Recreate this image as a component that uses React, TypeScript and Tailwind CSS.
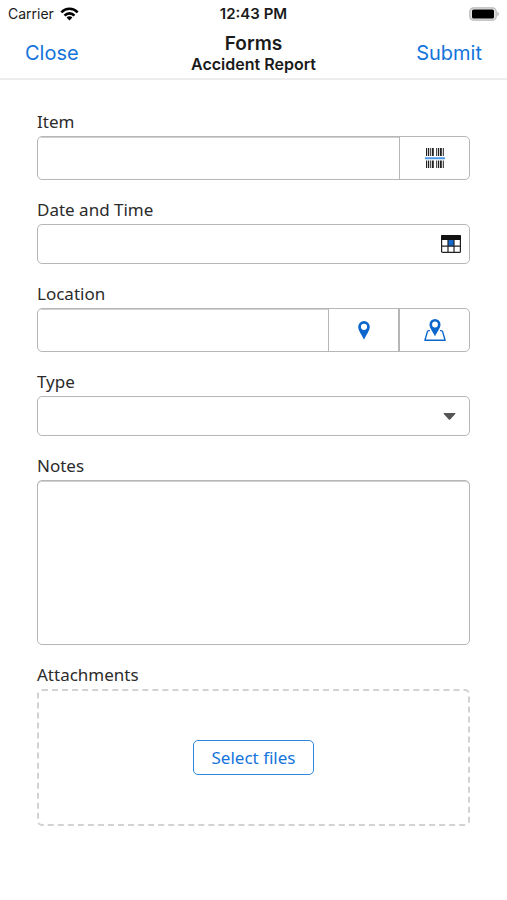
import React from 'react';

const inputClass =
  'min-w-0 flex-1 bg-transparent px-3 text-[17px] text-[#222] outline-none';
const insetClass = 'shadow-[inset_0_1px_0_#d0d0d0]';
const boxClass =
  'flex overflow-hidden rounded-[5px] border border-[#b6b6b6] bg-white';
const labelClass = 'block h-6 text-[17px] leading-5 text-[#2b2b2b]';

const WifiIcon = () => (
  <svg width="19" height="14" viewBox="0 0 20 14" fill="none" stroke="#000" strokeWidth="2.7" aria-hidden="true">
    <path d="M1.4 5.2C6.2.3 13.8.3 18.6 5.2" />
    <path d="M4.8 8.6C7.6 5.6 12.4 5.6 15.2 8.6" />
    <path d="M10 13.8 6.9 10.7C8.6 9 11.4 9 13.1 10.7Z" fill="#000" stroke="none" />
  </svg>
);

const BatteryIcon = () => (
  <svg width="30" height="14" viewBox="0 0 30 14" aria-hidden="true">
    <rect x="0.8" y="0.8" width="26.4" height="12.4" rx="3.8" fill="#e4e4e4" stroke="#b8b8b8" strokeWidth="1.2" />
    <rect x="3" y="2.5" width="22" height="9" rx="1.6" fill="#000" />
    <path d="M28.4 4.8C30.2 5.5 30.2 8.5 28.4 9.2Z" fill="#b0b0b0" />
  </svg>
);

const BarcodeIcon = () => (
  <svg width="20" height="20" viewBox="0 0 20 20" aria-hidden="true">
    <path
      d="M1 0h1.2v20H1zM3 0h1v20H3zM4.8 0h1v20h-1zM6.8 0h2v20h-2zM11.2 0h1v20h-1zM13 0h1v20h-1zM14.8 0h2v20h-2zM17.8 0h1v20h-1z"
      fill="#222"
    />
    <path d="M0 8h20v4.4H0z" fill="#fff" />
    <path d="M0 9.2h20v2H0z" fill="#4a96e6" />
  </svg>
);

const CalendarIcon = () => (
  <svg width="20" height="18" viewBox="0 0 20 18" aria-hidden="true">
    <rect x="0.6" y="0.6" width="18.8" height="16.8" rx="1" fill="#fff" stroke="#222" strokeWidth="1.2" />
    <path d="M0 1Q0 0 1 0H19Q20 0 20 1V5H0Z" fill="#111" />
    <rect x="7" y="5" width="6" height="6.2" fill="#1468cc" />
    <path d="M7 5v12.5M13 5v12.5M.5 11.2h19" stroke="#222" strokeWidth="1.2" />
  </svg>
);

const PinIcon = () => (
  <svg width="12" height="19" viewBox="0 0 12 19" aria-hidden="true">
    <path
      d="M6 0A5.8 5.8 0 0 0 .2 5.8C.2 10 3.9 13.7 6 18.8 8.1 13.7 11.8 10 11.8 5.8A5.8 5.8 0 0 0 6 0ZM6 2.7A3.1 3.1 0 1 1 6 8.9 3.1 3.1 0 0 1 6 2.7Z"
      fill="#0c66cc"
    />
  </svg>
);

const MapPinIcon = () => (
  <svg width="22" height="22" viewBox="0 0 22 22" aria-hidden="true">
    <path
      d="M11 0A5.5 5.5 0 0 0 5.5 5.5C5.5 9.6 9.1 12.8 11 17.6 12.9 12.8 16.5 9.6 16.5 5.5A5.5 5.5 0 0 0 11 0ZM11 2.6A2.9 2.9 0 1 1 11 8.4 2.9 2.9 0 0 1 11 2.6Z"
      fill="#0c66cc"
    />
    <path
      d="M6 11.6H4.8Q3.7 11.6 3.4 12.6L.9 21.3H21.1L18.6 12.6Q18.3 11.6 17.2 11.6H16"
      fill="none"
      stroke="#0c66cc"
      strokeWidth="1.4"
      strokeLinejoin="round"
    />
  </svg>
);

const App: React.FC = () => {
  return (
    <div className="min-h-screen bg-white font-['Noto_Sans','Open_Sans',sans-serif]">
      <header className="border-b-2 border-[#ededed] font-['Inter','Liberation_Sans',sans-serif]">
        {/* Status bar */}
        <div className="grid h-7 grid-cols-3 items-center px-2 text-[#1a1a1a]">
          <div className="flex items-center gap-1.5 text-sm">
            <span>Carrier</span>
            <WifiIcon />
          </div>
          <span className="text-center text-[15px] font-semibold">12:43 PM</span>
          <div className="flex justify-end">
            <BatteryIcon />
          </div>
        </div>

        {/* Navigation */}
        <div className="grid h-[50px] grid-cols-[1fr_auto_1fr] items-center px-[25px]">
          <button type="button" className="justify-self-start text-xl text-[#1474dc]">
            Close
          </button>
          <div className="pb-[3px] text-center font-semibold text-[#1a1a1a]">
            <h1 className="text-[19px] leading-6">Forms</h1>
            <h2 className="text-base leading-4">Accident Report</h2>
          </div>
          <button type="button" className="justify-self-end text-xl text-[#1474dc]">
            Submit
          </button>
        </div>
      </header>

      <form className="flex flex-col gap-5 px-[37px] pt-8 pb-10" onSubmit={(e) => e.preventDefault()}>
        <div>
          <label htmlFor="item" className={labelClass}>Item</label>
          <div className={`${boxClass} h-11`}>
            <input id="item" type="text" className={`${inputClass} ${insetClass}`} />
            <button type="button" aria-label="Scan barcode" className="flex w-[70px] items-center justify-center border-l border-[#b6b6b6]">
              <BarcodeIcon />
            </button>
          </div>
        </div>

        <div>
          <label htmlFor="date" className={labelClass}>Date and Time</label>
          <div className={`${boxClass} h-10`}>
            <input id="date" type="text" className={inputClass} />
            <button type="button" aria-label="Pick a date" className="flex items-center px-2">
              <CalendarIcon />
            </button>
          </div>
        </div>

        <div>
          <label htmlFor="location" className={labelClass}>Location</label>
          <div className={`${boxClass} h-11`}>
            <input id="location" type="text" className={`${inputClass} ${insetClass}`} />
            <button type="button" aria-label="Use current location" className="flex w-[70px] items-center justify-center border-l border-[#b6b6b6]">
              <PinIcon />
            </button>
            <button type="button" aria-label="Choose on map" className="flex w-[71px] items-center justify-center border-l-2 border-[#b6b6b6]">
              <MapPinIcon />
            </button>
          </div>
        </div>

        <div>
          <label htmlFor="type" className={labelClass}>Type</label>
          <div className={`${boxClass} relative h-10`}>
            <select id="type" className="w-full appearance-none bg-transparent px-3 text-[17px] outline-none">
              <option value=""></option>
            </select>
            <svg className="pointer-events-none absolute top-4 right-[13px]" width="13" height="7" viewBox="0 0 13 7" aria-hidden="true">
              <path d="M1 0H12Q12.8.4 12.2 1L7.2 6.4Q6.5 7 5.8 6.4L.8 1Q.2.4 1 0Z" fill="#555" />
            </svg>
          </div>
        </div>

        <div>
          <label htmlFor="notes" className={labelClass}>Notes</label>
          <textarea
            id="notes"
            className={`block h-[165px] w-full resize-none rounded-[5px] border border-[#b6b6b6] bg-white px-3 py-2 text-[17px] text-[#222] outline-none ${insetClass}`}
          />
        </div>

        <div role="group" aria-labelledby="attachments">
          <div id="attachments" className={labelClass}>Attachments</div>
          <div className="flex h-[137px] items-center justify-center rounded-[5px] border-2 border-dashed border-[#d2d2d2]">
            <button type="button" className="h-[35px] rounded-[5px] border border-[#2f86dc] px-[18px] text-[17px] text-[#1474dc]">
              Select files
            </button>
          </div>
        </div>
      </form>
    </div>
  );
};

export default App;
